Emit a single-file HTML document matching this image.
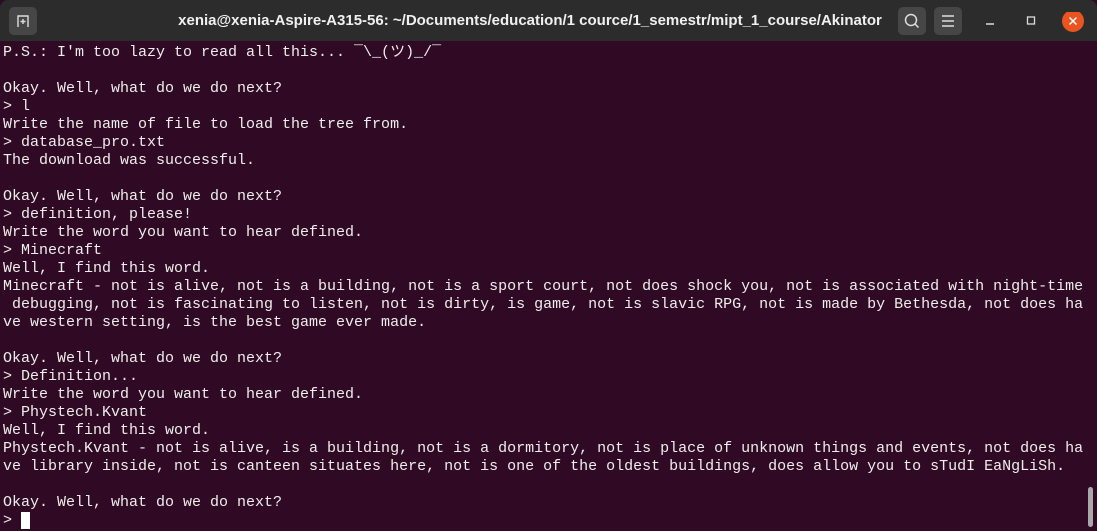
<!DOCTYPE html>
<html><head><meta charset="utf-8"><style>
html,body{margin:0;padding:0;width:1097px;height:531px;overflow:hidden;background:#300a24}
.tb{position:absolute;left:0;top:0;width:1097px;height:41px;background:#2c2c2c;border-radius:8px 8px 0 0}
.title{position:absolute;left:130px;width:800px;top:0;text-align:center;color:#f0f0f0;font:bold 15px/41px "Liberation Sans",sans-serif;white-space:nowrap}
.btn{position:absolute;top:7px;width:28px;height:28px;background:#464646;border-radius:5px}
pre{position:absolute;left:3px;top:44px;margin:0;font:15px/18px "Liberation Mono","DejaVu Sans Mono",monospace;color:#eeeeec;white-space:pre}
.cur{display:inline-block;width:9px;height:17px;background:#fff;vertical-align:top}
.sb{position:absolute;left:1088px;top:487px;width:5px;height:40px;background:#a8a8a8;border-radius:3px}
</style></head><body>
<div class="tb">
<div class="btn" style="left:9px"><svg width="28" height="28"><path d="M9 20V9h10v11M14 12v5M11.5 14.5h5" stroke="#ddd" stroke-width="1.4" fill="none"/></svg></div>
<div class="title">xenia@xenia-Aspire-A315-56: ~/Documents/education/1 cource/1_semestr/mipt_1_course/Akinator</div>
<div class="btn" style="left:898px"><svg width="28" height="28"><circle cx="13" cy="13" r="5.5" stroke="#ddd" stroke-width="1.5" fill="none"/><path d="M17 17l3.5 3.5" stroke="#ddd" stroke-width="1.5"/></svg></div>
<div class="btn" style="left:934px"><svg width="28" height="28"><path d="M8 9h12M8 14h12M8 19h12" stroke="#ddd" stroke-width="1.4"/></svg></div>
<svg style="position:absolute;left:985px;top:12px" width="100" height="26"><path d="M1 12h8" stroke="#ddd" stroke-width="1.5"/><rect x="42.5" y="5" width="7" height="7" stroke="#ddd" stroke-width="1.3" fill="none"/><circle cx="88" cy="9" r="11" fill="#e95420"/><path d="M84.5 5.5l7 7M91.5 5.5l-7 7" stroke="#fff" stroke-width="1.5"/></svg>
</div>
<pre>P.S.: I'm too lazy to read all this... ¯\_(ツ)_/¯

Okay. Well, what do we do next?
&gt; l
Write the name of file to load the tree from.
&gt; database_pro.txt
The download was successful.

Okay. Well, what do we do next?
&gt; definition, please!
Write the word you want to hear defined.
&gt; Minecraft
Well, I find this word.
Minecraft - not is alive, not is a building, not is a sport court, not does shock you, not is associated with night-time
 debugging, not is fascinating to listen, not is dirty, is game, not is slavic RPG, not is made by Bethesda, not does ha
ve western setting, is the best game ever made.

Okay. Well, what do we do next?
&gt; Definition...
Write the word you want to hear defined.
&gt; Phystech.Kvant
Well, I find this word.
Phystech.Kvant - not is alive, is a building, not is a dormitory, not is place of unknown things and events, not does ha
ve library inside, not is canteen situates here, not is one of the oldest buildings, does allow you to sTudI EaNgLiSh.

Okay. Well, what do we do next?
&gt; <span class="cur"></span></pre>
<div class="sb"></div>
</body></html>
